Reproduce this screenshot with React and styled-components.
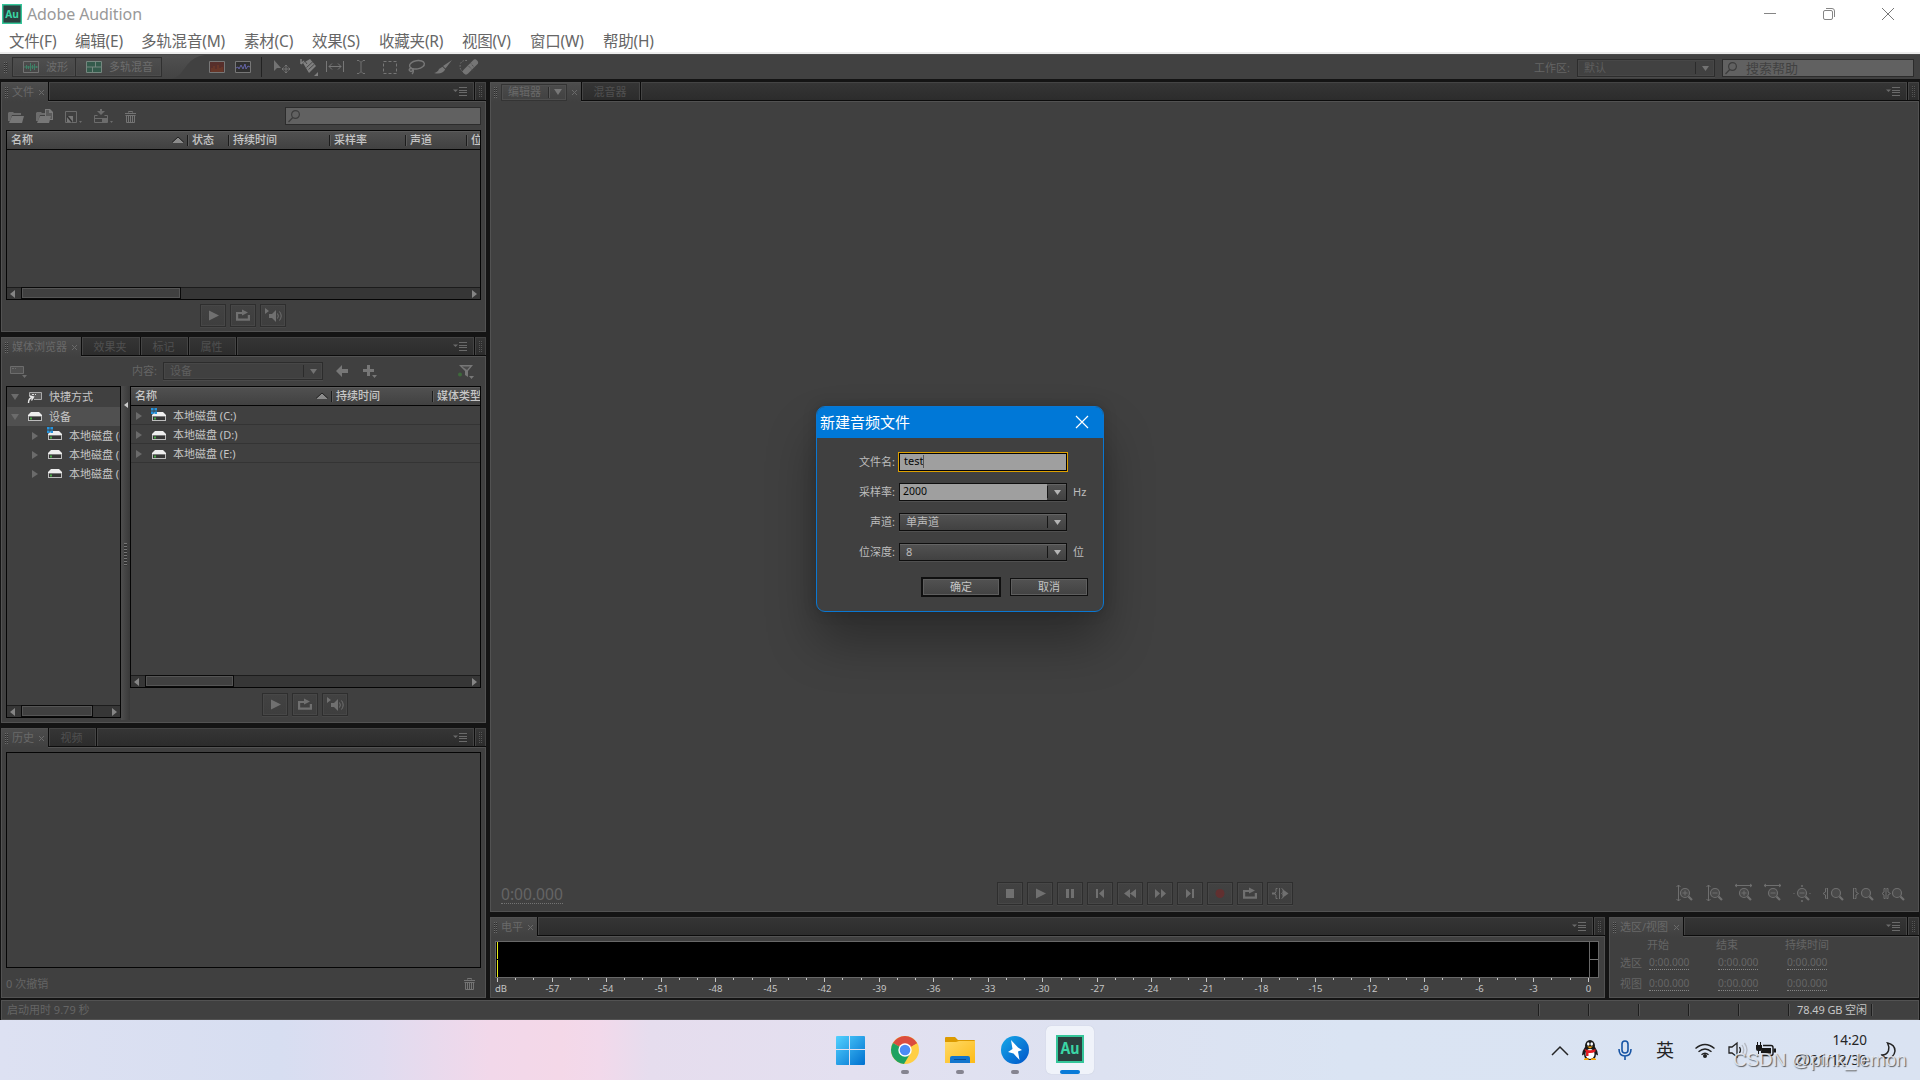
import { Fragment } from "react";
import styled, { createGlobalStyle, css } from "styled-components";

const uiFont = `"Noto Sans", "Noto Sans CJK SC", sans-serif`;

const menus = [
  { text: "文件(F)", width: 66 },
  { text: "编辑(E)", width: 66 },
  { text: "多轨混音(M)", width: 103 },
  { text: "素材(C)", width: 68 },
  { text: "效果(S)", width: 67 },
  { text: "收藏夹(R)", width: 83 },
  { text: "视图(V)", width: 68 },
  { text: "窗口(W)", width: 73 },
  { text: "帮助(H)", width: 68 },
];
const disks = ["C:", "D:", "E:"];
const transport = [
  "stop",
  "play",
  "pause",
  "first",
  "rewind",
  "forward",
  "last",
  "record",
  "loop",
  "skip",
];
const ticks = Array.from({ length: 61 }, (_, i) => i);

export default function App() {
  return (
    <>
      <GlobalStyle />
      <Screen>
        <TitleBar>
          <AuLogo size={20} />
          <span>Adobe Audition</span>
          <WindowControls />
        </TitleBar>
        <MenuBar>
          {menus.map(el => (
            <MenuItem key={el.text} $w={el.width}>
              {el.text}
            </MenuItem>
          ))}
        </MenuBar>
        <MainToolbar />
        <Workspace>
          <LeftColumn>
            <FilesPanel />
            <MediaPanel />
            <HistoryPanel />
          </LeftColumn>
          <RightColumn>
            <EditorPanel />
            <BottomRow>
              <LevelsPanel />
              <SelectionPanel />
            </BottomRow>
          </RightColumn>
        </Workspace>
        <StatusBar>
          <p>启动用时 9.79 秒</p>
          <StatusCells>
            {[50, 50, 50, 50, 50].map((w, i) => (
              <StatusCell key={i} $w={w} />
            ))}
            <StatusCell $w={83}>78.49 GB 空闲</StatusCell>
            <StatusCell $w={47} />
          </StatusCells>
        </StatusBar>
        <Taskbar />
        <NewFileDialog />
        <Watermark>CSDN @pink_lemon</Watermark>
      </Screen>
    </>
  );
}

const GlobalStyle = createGlobalStyle`
  * { box-sizing: border-box; }
  body { margin: 0; overflow: hidden; background: #141414; }
  p { margin: 0; }
  svg { display: block; flex: none; overflow: visible; }
`;
const Screen = styled.div`
  position: relative;
  display: flex;
  flex-direction: column;
  width: 1920px;
  height: 1080px;
  font: 11px/14px ${uiFont};
  color: #656565;
  background: #141414;
  white-space: nowrap;
  overflow: hidden;
`;
const TitleBar = styled.header`
  display: flex;
  align-items: center;
  height: 28px;
  padding-left: 2px;
  background: #fff;
  color: #999;
  font-size: 16px;
  letter-spacing: -0.1px;
  span {
    flex: 1;
    margin-left: 5px;
  }
`;
const MenuBar = styled.nav`
  display: flex;
  height: 26px;
  padding-left: 9px;
  border-bottom: 2px solid #ececec;
  background: #fff;
  color: #666;
`;
const MenuItem = styled.span`
  width: ${({ $w }) => $w}px;
  font-size: 15.5px;
  line-height: 26px;
  letter-spacing: -0.2px;
`;
// Header Fin

const Workspace = styled.main`
  display: flex;
  gap: 4px;
  height: 919px;
  margin: 3px 1px 0;
`;
const LeftColumn = styled.div`
  display: grid;
  grid-template-rows: 250px 386px 270px;
  row-gap: 5px;
  width: 485px;
  height: 916px;
`;
const RightColumn = styled.div`
  display: grid;
  grid-template-rows: 830px 81px;
  row-gap: 5px;
  width: 1429px;
  height: 916px;
`;
const BottomRow = styled.div`
  display: grid;
  grid-template-columns: 1115px 310px;
  column-gap: 4px;
`;
// Workspace Fin

const PanelBox = styled.section`
  display: flex;
  flex-direction: column;
  min-width: 0;
  min-height: 0;
`;
const TabRow = styled.div`
  display: flex;
  height: 19px;
  background: #0c0c0c;
`;
const stripFill = css`
  height: 18px;
  border: 1px solid #444;
  border-bottom: 0;
  background: linear-gradient(#353535, #2c2c2c);
`;
const ActiveTab = styled.div`
  position: relative;
  display: flex;
  align-items: center;
  width: ${({ $w }) => $w}px;
  height: 20px;
  padding: 0 4px 1px 3px;
  border: 1px solid #525252;
  border-width: 1px 0 0 1px;
  background: linear-gradient(#4c4c4c, #404040);
  color: #696969;
  span {
    margin-left: 3px;
  }
  > svg {
    margin-left: auto;
  }
`;
const Tab = styled.div`
  ${stripFill}
  width: ${({ $w }) => $w}px;
  margin-left: 1px;
  padding-right: 2px;
  color: #505050;
  line-height: 18px;
  text-align: center;
`;
const Strip = styled.div`
  ${stripFill}
  flex: 1;
  display: flex;
  justify-content: flex-end;
  margin-left: 1px;
  padding: 4px 6px 0 0;
`;
const StripEnd = styled.div`
  ${stripFill}
  display: flex;
  width: 11px;
  margin-left: 1px;
  padding: 3px 0 0 3px;
`;
const Grip = styled.i`
  flex: none;
  width: 4px;
  height: 11px;
  background: repeating-linear-gradient(
      to right,
      transparent 0 1px,
      ${({ $dark }) => ($dark ? "#303030" : "#444")} 1px 2px
    ),
    repeating-linear-gradient(
      ${({ $dark }) => ($dark ? "#555" : "#6c6c6c")} 0 1px,
      #2c2c2c 1px 2px
    );
`;
const PanelBody = styled.div`
  flex: 1;
  display: flex;
  flex-direction: column;
  min-height: 0;
  border: 1px solid #525252;
  background: #404040;
`;

function Panel({ tab, tabWidth, tabs = [], tabContent, children }) {
  return (
    <PanelBox>
      <TabRow>
        <ActiveTab $w={tabWidth}>
          <Grip />
          {tabContent || <span>{tab}</span>}
          <CloseMark />
        </ActiveTab>
        {tabs.map(el => (
          <Tab key={el.text} $w={el.width}>
            {el.text}
          </Tab>
        ))}
        <Strip>
          <svg width="14" height="9" stroke="#6a6a6a" fill="#6a6a6a">
            <path d="M0 2.5h5L2.5 5Z" stroke="none" />
            <path d="M6 .5h8M6 3.5h8M6 5.5h8M6 8.5h8" strokeWidth="1" />
          </svg>
        </Strip>
        <StripEnd>
          <Grip $dark />
        </StripEnd>
      </TabRow>
      <PanelBody>{children}</PanelBody>
    </PanelBox>
  );
}
// Panel Fin

const ListBox = styled.div`
  display: flex;
  flex-direction: column;
  width: ${({ $w }) => ($w ? `${$w}px` : "auto")};
  height: ${({ $h }) => $h}px;
  border: 1px solid #050505;
  background: #404040;
  color: #c6c6c6;
  overflow: hidden;
`;
const ListHead = styled.div`
  display: flex;
  flex: none;
  height: 19px;
  border-top: 1px solid #5c5c5c;
  border-bottom: 1px solid #050505;
  background: linear-gradient(#505050, #414141);
`;
const HeadCell = styled.div`
  display: flex;
  flex: none;
  align-items: center;
  justify-content: space-between;
  width: ${({ $w }) => $w}px;
  padding: 0 3px 1px 4px;
  font-weight: 500;
  & + & {
    background: linear-gradient(#1c1c1c, #1c1c1c) 0 3px / 1px 11px no-repeat,
      linear-gradient(#5b5b5b, #5b5b5b) 1px 3px / 1px 11px no-repeat;
    padding-left: 5px;
  }
`;
const ScrollTrack = styled.div`
  display: flex;
  align-items: stretch;
  height: 12px;
  margin-top: auto;
  border-top: 1px solid #1c1c1c;
  background: #363636;
  svg {
    margin: 2px 3px 0;
  }
  svg:last-child {
    margin-left: auto;
    margin-right: 3px;
  }
`;
const Thumb = styled.div`
  width: ${({ $w }) => $w}px;
  margin: -1px 0 0 3px;
  border: 1px solid #0a0a0a;
  background: #404040;
  box-shadow: inset 0 0 0 1px #555;
`;

function ScrollBar({ thumb }) {
  return (
    <ScrollTrack>
      <svg width="5" height="8" fill="#858585">
        <path d="M5 0v8L0 4Z" />
      </svg>
      <Thumb $w={thumb} />
      <svg width="5" height="8" fill="#858585">
        <path d="M0 0v8l5-4Z" />
      </svg>
    </ScrollTrack>
  );
}

const SortMark = () => (
  <svg width="12" height="6">
    <path d="M0 6 6 0l6 6Z" fill="#8b8b8b" />
    <path d="M0 5.5 6 0l6 5.5" fill="none" stroke="#222" />
  </svg>
);
const CloseMark = () => (
  <svg width="5" height="5" stroke="#6a6a6a">
    <path d="m0 0 5 5M5 0 0 5" />
  </svg>
);
// List Fin

const ButtonRow = styled.div`
  display: flex;
  gap: 4px;
  margin: ${({ $m }) => $m};
`;
const SquareButton = styled.button`
  display: grid;
  place-items: center;
  width: 26px;
  height: 23px;
  padding: 0;
  border: 1px solid #2e2e2e;
  background: linear-gradient(#424242, #3e3e3e);
  box-shadow: inset 0 0 0 1px #474747, 0 1px 0 #474747;
`;
const playGlyphs = {
  stop: <path d="M4 3h8v9H4Z" />,
  play: <path d="M4 2.5 14 7.5 4 12.5Z" />,
  pause: <path d="M4 3h3v9H4Zm5 0h3v9H9Z" />,
  first: <path d="M4 3h2v9H4Zm8 0v9L7 7.5Z" />,
  rewind: <path d="M8 3v9L2 7.5Zm6 0v9L8 7.5Z" />,
  forward: <path d="M3 3v9l5-4.5Zm6 0v9l5-4.5Z" />,
  last: <path d="M4 3v9l5-4.5ZM10 3h2v9h-2Z" />,
  record: <circle cx="8" cy="7.5" r="4.5" fill="#613030" />,
  loop: (
    <path d="M1 4h6V1.5L13 4.5 7 7.5V6H3.2v4.5h9.6V7H15v5.7H1Z" />
  ),
  skip: (
    <>
      <path d="M0 6.5h3v2H0ZM7 2h1v11H7ZM11 3.5l5.500 4-5.500 4Z" />
      <path
        d="M5.500 2.500H4v3l-1 2 1 2v3h1.500M9.500 2.500q1.500 0 1.500 2v2l-1.500 1 1.500 1v2q0 2-1.500 2"
        fill="none"
        stroke="#707070"
      />
    </>
  ),
  speaker: (
    <>
      <path d="M0 0v6l4-3ZM4 6h3l4-4v12l-4-4H4Z" />
      <path
        d="M12.5 5.5q1.7 2.5 0 5M14.5 3.5q3.4 4.5 0 9"
        fill="none"
        stroke="#707070"
      />
    </>
  ),
};

function PlayButton({ name }) {
  return (
    <SquareButton>
      <svg width="16" height="15" fill="#707070">
        {playGlyphs[name]}
      </svg>
    </SquareButton>
  );
}
// Buttons Fin

const ToolbarBox = styled.div`
  display: flex;
  align-items: center;
  height: 25px;
  background: #414141;
  border-top: 1px solid #4a4a4a;
`;
const ModeGroup = styled.div`
  display: flex;
  align-items: center;
  width: 208px;
  height: 24px;
  padding-left: 4px;
  background: linear-gradient(#505050, #434343);
  clip-path: path("M0 0H205Q194 1 187 10L181 18Q177 23 170 24H0Z");
`;
const ModeButton = styled.div`
  display: flex;
  align-items: center;
  gap: 7px;
  width: ${({ $w }) => $w}px;
  height: 20px;
  padding-left: 10px;
  margin-left: ${({ $first }) => ($first ? 4 : -1)}px;
  border: 1px solid #303030;
  box-shadow: inset 0 0 0 1px #4c4c4c;
  color: #6d6d6d;
`;
const ToolIcons = styled.div`
  display: flex;
  align-items: center;
  height: 20px;
  margin-left: 10px;
  padding-left: 7px;
  border-left: 1px solid #222;
`;
const ToolSlot = styled.span`
  display: grid;
  place-items: center;
  width: ${({ $w }) => $w}px;
`;
const Swatch = styled.svg`
  margin-left: ${({ $gap }) => $gap}px;
`;
const Select = styled.div`
  display: flex;
  align-items: center;
  width: ${({ $w }) => $w}px;
  height: 18px;
  padding: 0 5px 0 6px;
  border: 1px solid #2c2c2c;
  box-shadow: inset 0 0 0 1px #474747, 0 1px 0 #4a4a4a;
  color: #5e5e5e;
  ${({ $bright }) =>
    $bright &&
    css`
      border-color: #0e0e0e;
      background: linear-gradient(#525252, #414141);
      color: #bdbdbd;
      box-shadow: inset 0 1px 0 #646464, 0 1px 0 #505050;
    `}
  span {
    flex: 1;
  }
`;
const SelectArrow = styled.i`
  width: 14px;
  height: 12px;
  border-left: 1px solid ${({ $bright }) => ($bright ? "#161616" : "#2b2b2b")};
  color: ${({ $bright }) => ($bright ? "#b5b5b5" : "#737373")};
  svg {
    margin: 4px 0 0 6px;
  }
`;
const SearchBox = styled.div`
  display: flex;
  align-items: center;
  gap: 9px;
  width: ${({ $w }) => $w}px;
  height: 18px;
  margin-left: auto;
  padding-left: 2px;
  border: 1px solid #2c2c2c;
  background: #616161;
  color: #414141;
  font-size: 13px;
  line-height: 14px;
  span {
    padding-bottom: 1px;
  }
`;

function Arrow({ bright }) {
  return (
    <SelectArrow $bright={bright}>
      <svg width="7" height="5" fill="currentColor">
        <path d="M0 0h7L3.5 5Z" />
      </svg>
    </SelectArrow>
  );
}
const SearchGlyph = () => (
  <svg width="12" height="13" fill="none" stroke="#3c3c3c" strokeWidth="1.2">
    <circle cx="7.5" cy="4.5" r="3.9" />
    <path d="M4.8 7.5.5 12" />
  </svg>
);

function MainToolbar() {
  return (
    <ToolbarBox>
      <ModeGroup>
        <Grip />
        <ModeButton $w={64} $first>
          <svg width="16" height="12" stroke="#737373" fill="none">
            <path d="M.5.5h15v11H.5Z" />
            <path
              d="M1 6h14M3.5 4v4M5.5 5v3M7.5 2v8M9.5 4v4M11.5 3v6M13.5 5v2"
              stroke="#3f8067"
            />
          </svg>
          波形
        </ModeButton>
        <ModeButton $w={87}>
          <svg width="16" height="12" stroke="#75877f" fill="#345b4c">
            <path d="M.5.5h15v11H.5ZM.5 6h15M9.5.5V6M6.5 6v5.5" />
          </svg>
          多轨混音
        </ModeButton>
      </ModeGroup>
      <Swatch width="16" height="12" $gap={1}>
        <path d="M.5.5h15v11H.5Z" fill="#572f2b" stroke="#777" />
        <path
          d="M3 11V7M5 11V5M7 11V8M9 11V4M11 11V7M13 11V6"
          stroke="#783f27"
        />
      </Swatch>
      <Swatch width="16" height="12" $gap={10} fill="none">
        <path d="M.5.5h15v11H.5Z" fill="#303030" stroke="#777" />
        <path d="m1 7 2-1 1 2 2-4 2 4 2-5 1 5 2-3 2 1" stroke="#6464a7" />
      </Swatch>
      <ToolIcons>
        <ToolSlot $w={26}>
          <svg width="18" height="14" fill="#737373">
            <path d="M1 0v11l3-3h4Z" />
            <path
              d="M13 5v8M9 9h8M11.5 6.5 13 5l1.5 1.5M11.5 11.5 13 13l1.5-1.5M10.5 7.5 9 9l1.5 1.5M15.5 7.5 17 9l-1.5 1.5"
              fill="none"
              stroke="#737373"
            />
          </svg>
        </ToolSlot>
        <ToolSlot $w={28}>
          <svg width="18" height="18" fill="#808080">
            <path d="M1 1v5M1 6l3-3" stroke="#808080" strokeWidth="1.5" />
            <path d="m3 5 7-4 6 7-7 7Z" />
            <path
              d="m4 2 3 4M6.500 9.500l6.500-6M8.500 11.500l6-5.500"
              stroke="#4a4a4a"
              fill="none"
            />
            <path d="M18 14v4h-4Z" />
          </svg>
        </ToolSlot>
        <ToolSlot $w={24}>
          <svg width="18" height="12" fill="none" stroke="#777">
            <path d="M.5 0v11M17.5 0v11M3 5.5h12M6 2.5l-3 3 3 3M12 2.5l3 3-3 3" />
          </svg>
        </ToolSlot>
        <ToolSlot $w={28}>
          <svg width="8" height="14" fill="none" stroke="#737373">
            <path d="M0 .5h2L4 2.5 6 .5h2M4 2.5v9M0 13.5h2l2-2 2 2h2" />
          </svg>
        </ToolSlot>
        <ToolSlot $w={30}>
          <svg width="14" height="13" fill="none" stroke="#777">
            <path d="M.5.5h13v12H.5Z" strokeDasharray="3 2" />
          </svg>
        </ToolSlot>
        <ToolSlot $w={22}>
          <svg
            width="17"
            height="14"
            fill="none"
            stroke="#777"
            strokeWidth="1.4"
          >
            <ellipse
              cx="9"
              cy="4.8"
              rx="7.5"
              ry="4.1"
              transform="rotate(-10 9 5)"
            />
            <path d="M3 8q-3 1.5-1 3t3-2q-2-1-3 0M5 9q1 3-1 5" />
          </svg>
        </ToolSlot>
        <ToolSlot $w={32}>
          <svg width="18" height="14" fill="#777">
            <path d="M18 0 9 6l2.5 2.5ZM8.5 6.8l2.7 2.6Q8 15 0 13q4-1 5-4Z" />
          </svg>
        </ToolSlot>
        <ToolSlot $w={20}>
          <svg width="20" height="16">
            <path
              d="M8 1.5Q2 1 1.2 6T4.5 13"
              fill="none"
              stroke="#777"
              strokeDasharray="1.5 1.5"
            />
            <path
              d="m7 12.5 9-9"
              stroke="#757575"
              strokeWidth="6"
              strokeLinecap="round"
            />
            <path
              d="m9.5 7 5 5M12 4.5l4 5"
              stroke="#4a4a4a"
              strokeDasharray="1 1"
            />
          </svg>
        </ToolSlot>
      </ToolIcons>
      <WorkspacePick>
        工作区:
        <Select $w={138}>
          <span>默认</span>
          <Arrow />
        </Select>
        <SearchBox $w={192}>
          <SearchGlyph />
          <span>搜索帮助</span>
        </SearchBox>
      </WorkspacePick>
    </ToolbarBox>
  );
}
const WorkspacePick = styled.div`
  display: flex;
  align-items: center;
  gap: 7px;
  margin: 2px 6px 0 auto;
`;
// MainToolbar Fin

const FilesTools = styled.div`
  display: flex;
  align-items: center;
  height: 28px;
  padding: 0 4px 0 6px;
`;
const FileIcons = styled.div`
  display: flex;
  align-items: flex-end;
  gap: 12px;
`;
const Inset = styled.div`
  padding: ${({ $top }) => $top || 0}px 4px 0;
`;

const TrashIcon = () => (
  <svg width="11" height="12" fill="none" stroke="#747474">
    <path d="M3.5 1.5v-1h4v1M0 2.5h11M1.5 4.5v7h8v-7M.5 4.5h10M3.5 5v6M5.5 5v6M7.5 5v6" />
  </svg>
);

function FilesPanel() {
  return (
    <Panel tab="文件" tabWidth={47}>
      <FilesTools>
        <FileIcons>
          <svg width="16" height="11" fill="#6c6c6c">
            <path d="M0 9V1l1-1h4l1 1h7v2H4L2 9Z" />
            <path d="m1 11 3-7h12l-2 7Z" fill="#777" />
          </svg>
          <svg width="17" height="14" fill="#6c6c6c">
            <path d="M0 12V4l1-1h4l1 1h7v2H4l-2 6Z" />
            <path d="M9 0h5l3 3v8H9Z" fill="#7a7a7a" />
            <path d="M10 1h3v3h3v6h-6Z" fill="#5a5a5a" />
            <path d="m1 14 3-7h11l-2 7Z" fill="#777" />
          </svg>
          <svg width="17" height="12" fill="#6c6c6c">
            <path d="M.5.5h11v11H.5Z" fill="none" stroke="#6c6c6c" />
            <path d="M2 5h6v6H2Z" fill="#777" />
            <path d="m2 5 5 6" stroke="#333" strokeWidth="1.5" />
            <path d="M14 10h3l-1.5 2Z" />
          </svg>
          <svg width="19" height="14" fill="#6c6c6c">
            <path d="M6 0h2v2h3L7 6 3 2h3Z" />
            <path
              d="M.5 6.5h3M10.5 6.5h3v7H.5v-7M.5 9.5h13M8.5 9.5v4"
              fill="none"
              stroke="#6c6c6c"
            />
            <path d="M9 10h4v3H9ZM16 12h3l-1.5 2Z" />
          </svg>
          <TrashIcon />
        </FileIcons>
        <SearchBox $w={196}>
          <SearchGlyph />
        </SearchBox>
      </FilesTools>
      <Inset>
        <ListBox $h={170}>
          <ListHead>
            <HeadCell $w={180}>
              名称 <SortMark />
            </HeadCell>
            <HeadCell $w={41}>状态</HeadCell>
            <HeadCell $w={101}>持续时间</HeadCell>
            <HeadCell $w={76}>采样率</HeadCell>
            <HeadCell $w={61}>声道</HeadCell>
            <HeadCell $w={40}>位</HeadCell>
          </ListHead>
          <ScrollBar thumb={160} />
        </ListBox>
      </Inset>
      <ButtonRow $m="4px 0 0 198px">
        <PlayButton name="play" />
        <PlayButton name="loop" />
        <PlayButton name="speaker" />
      </ButtonRow>
    </Panel>
  );
}
// FilesPanel Fin

const MediaTools = styled.div`
  display: flex;
  align-items: center;
  height: 29px;
  padding: 0 11px 1px 8px;
  > label {
    width: 31px;
    margin-left: 105px;
  }
  > svg:nth-of-type(2) {
    margin-left: 13px;
  }
  > svg:nth-of-type(3) {
    margin-left: 15px;
  }
  > svg:last-child {
    margin-left: auto;
  }
`;
const MediaBody = styled.div`
  display: flex;
  padding-left: 4px;
`;
const TreeRow = styled.div`
  display: flex;
  align-items: center;
  flex: none;
  height: ${({ $h }) => $h || 19}px;
  padding-left: ${({ $deep }) => ($deep ? 24 : 4)}px;
  background: ${({ $active }) => ($active ? "#505050" : "none")};
  span {
    margin-left: 7px;
  }
`;
const DiskRow = styled(TreeRow)`
  padding: 2px 0 0 4px;
  border-bottom: 1px solid #343434;
`;
const Splitter = styled.div`
  width: 9px;
  height: 334px;
  padding: 16px 0 0 3px;
  background: linear-gradient(to right, #4e4e4e, #393939);
  i {
    display: block;
    width: 3px;
    height: 23px;
    margin: 135px 0 0 0;
    background: repeating-linear-gradient(#777 0 1px, #333 1px 3px);
  }
`;

const Twisty = ({ open }) => (
  <svg width="8" height="8" fill="#6b6b6b">
    <path d={open ? "M0 1h8L4 7Z" : "M1 0v8l6-4Z"} />
  </svg>
);
const DriveIcon = ({ system, left = 9 }) => (
  <IconSvg width="14" height="9" $left={left}>
    <path d="M3 0h8l3 3v1H0V3Z" fill="#eee" />
    <path d="M0 4h14v5H0Z" fill="#bcbcbc" />
    <path d="M1 4.500h12V8H1Z" fill="#363636" />
    <path d="M2 5.5h2v2H2Z" fill="#48a746" />
    {system && (
      <path
        d="M-1-4h2.6v2.6H-1ZM2.4-4H5v2.6H2.4ZM-1-.6h2.6V2H-1ZM2.4-.6H5V2H2.4Z"
        fill="#2494df"
      />
    )}
  </IconSvg>
);
const IconSvg = styled.svg`
  margin-left: ${({ $left }) => $left}px;
`;

function MediaPanel() {
  return (
    <Panel
      tab="媒体浏览器"
      tabWidth={80}
      tabs={[
        { text: "效果夹", width: 58 },
        { text: "标记", width: 47 },
        { text: "属性", width: 47 },
      ]}
    >
      <MediaTools>
        <svg width="17" height="13" fill="#6c6c6c">
          <path d="M.5 1.5h13v7H.5Z" fill="#505050" stroke="#6c6c6c" />
          <path d="M2 3h2v1H2ZM5 3h1v1H5ZM12 10h5l-2.5 3Z" />
        </svg>
        <label>内容:</label>
        <Select $w={160}>
          <span>设备</span>
          <Arrow />
        </Select>
        <svg width="12" height="12" fill="#777">
          <path d="M6 0v4h6v4H6v4L0 6Z" />
        </svg>
        <svg width="15" height="14" fill="#777">
          <path d="M4 1h3v4h4v3H7v4H4V8H0V5h4ZM9 11h5l-2.5 3Z" />
        </svg>
        <svg width="16" height="13" fill="#777">
          <path d="M1 0h14l-5 6v6L7 10V6Z" />
          <path d="M4 1.5h8L9 5Z" fill="#4a4a4a" />
          <circle cx="2" cy="9.5" r="2" fill="#3d6a3b" />
          <path d="M11 11h5l-2.5 3Z" />
        </svg>
      </MediaTools>
      <MediaBody>
        <ListBox $w={115} $h={332}>
          <TreeRow $h={20}>
            <Twisty open />
            <IconSvg width="14" height="11" fill="none" $left={9}>
              <path d="M1.500 4V.5h12v7H6" fill="#5c5c5c" stroke="#aaa" />
              <path d="M4 2.500h2M7 2.500h1" stroke="#ddd" />
              <path
                d="M.5 11q0-5 4-5.500M1.500 4l4 1-2 3.500"
                stroke="#e8e8e8"
                strokeWidth="1.400"
              />
            </IconSvg>
            <span>快捷方式</span>
          </TreeRow>
          <TreeRow $active>
            <Twisty open />
            <DriveIcon />
            <span>设备</span>
          </TreeRow>
          {disks.map((el, i) => (
            <TreeRow key={el} $deep>
              <Twisty />
              <DriveIcon system={i === 0} />
              <span>本地磁盘 ({el})</span>
            </TreeRow>
          ))}
          <ScrollBar thumb={72} />
        </ListBox>
        <Splitter>
          <svg width="4" height="6" fill="#ccc">
            <path d="M4 0v6L0 3Z" />
          </svg>
          <i />
        </Splitter>
        <div>
          <ListBox $w={351} $h={302}>
            <ListHead>
              <HeadCell $w={200}>
                名称 <SortMark />
              </HeadCell>
              <HeadCell $w={101}>持续时间</HeadCell>
              <HeadCell $w={80}>媒体类型</HeadCell>
            </ListHead>
            {disks.map((el, i) => (
              <DiskRow key={el}>
                <Twisty />
                <DriveIcon system={i === 0} />
                <span>本地磁盘 ({el})</span>
              </DiskRow>
            ))}
            <ScrollBar thumb={89} />
          </ListBox>
          <ButtonRow $m="5px 0 0 132px">
            <PlayButton name="play" />
            <PlayButton name="loop" />
            <PlayButton name="speaker" />
          </ButtonRow>
        </div>
      </MediaBody>
    </Panel>
  );
}
// MediaPanel Fin

const HistoryFoot = styled.footer`
  display: flex;
  align-items: center;
  justify-content: space-between;
  height: 31px;
  padding: 2px 10px 0 4px;
`;

function HistoryPanel() {
  return (
    <Panel tab="历史" tabWidth={47} tabs={[{ text: "视频", width: 47 }]}>
      <Inset $top={4}>
        <ListBox $h={216} />
      </Inset>
      <HistoryFoot>
        0 次撤销
        <TrashIcon />
      </HistoryFoot>
    </Panel>
  );
}
// HistoryPanel Fin

const EditorPick = styled.div`
  display: flex;
  align-items: center;
  width: 66px;
  height: 17px;
  margin-left: 3px;
  padding-left: 6px;
  border: 1px solid #343434;
  box-shadow: inset 0 0 0 1px #4f4f4f;
  svg {
    margin-left: 4px;
  }
`;
const PickBar = styled.i`
  width: 2px;
  height: 11px;
  margin-left: 7px;
  background: linear-gradient(to right, #2c2c2c 50%, #5a5a5a 50%);
`;
const EditorFoot = styled.footer`
  display: grid;
  grid-template-columns: 506px 1fr 242px;
  align-items: center;
  height: 36px;
  margin-top: auto;
`;
const BigTime = styled.span`
  justify-self: start;
  margin: 3px 0 0 10px;
  border-bottom: 1px dotted #737373;
  font-size: 15.6px;
  line-height: 17px;
`;
const ZoomIcons = styled.div`
  display: flex;
  gap: 9.6px;
  padding-top: 1px;
`;
const zoomExtras = [
  { w: 20, d: "M2.500-1v16M.5 1l2-2 2 2M.5 13l2 2 2-2", sign: "+" },
  { w: 20, d: "M2.500-1v16M.5 1l2-2 2 2M.5 13l2 2 2-2", sign: "-" },
  { w: 19, d: "M0-.5h17M2-2 0-.5 2 1M15-2l2 1.500L15 1", sign: "+" },
  { w: 20, d: "M0-.5h17M2-2 0-.5 2 1M15-2l2 1.500L15 1", sign: "-" },
  { w: 20, d: "M9-1v2M8 0h2M9 14v2M8 15h2M1 7v1M17 7v1", sign: "-" },
  { w: 20, d: "M3.500 2.500h-1v3.500L0 7.500 2.500 9v3.500h1M4.500 2v11", sign: "" },
  { w: 20, d: "M.5 2v11M1.500 2.500h1.500v3.500L5.500 7.500 3 9v3.500H1.500", sign: "" },
  {
    w: 22,
    d: "M3 2.500H2v3.500L0 7.500 2 9v3.500h1M4 2v11M5 2.500h1v3.500L8.500 7.500 6 9v3.500H5",
    sign: "",
  },
];

function ZoomIcon({ w, d, sign }) {
  const cx = sign ? 9 : w - 7;
  return (
    <svg width={w} height="16" fill="none" stroke="#6f6f6f">
      <path d={d} />
      <circle cx={cx} cy="7" r="4.500" fill="#4a4a4a" strokeWidth="1.200" />
      <path d={`M${cx + 3.5} 10.500l3.500 3.500`} strokeWidth="2.200" />
      {sign && <path d={`M${cx - 2.5} 7h5`} />}
      {sign === "+" && <path d={`M${cx} 4.500v5`} />}
    </svg>
  );
}

function EditorPanel() {
  return (
    <Panel
      tabWidth={91}
      tabs={[{ text: "混音器", width: 58 }]}
      tabContent={
        <EditorPick>
          编辑器
          <PickBar />
          <svg width="8" height="6" fill="#777">
            <path d="M0 0h8L4 6Z" />
          </svg>
        </EditorPick>
      }
    >
      <EditorFoot>
        <BigTime>0:00.000</BigTime>
        <ButtonRow $m="1px 0 0 0">
          {transport.map(el => (
            <PlayButton key={el} name={el} />
          ))}
        </ButtonRow>
        <ZoomIcons>
          {zoomExtras.map((el, i) => (
            <ZoomIcon key={i} {...el} />
          ))}
        </ZoomIcons>
      </EditorFoot>
    </Panel>
  );
}
// EditorPanel Fin

const Meter = styled.div`
  display: flex;
  width: 1104px;
  height: 37px;
  margin: 4px 0 0 4px;
  border: 1px solid #686868;
  background: #000;
`;
const PeakLine = styled.div`
  width: 1px;
  height: 35px;
  margin-left: 1px;
  background: linear-gradient(#e8ee18 17px, #000 17px 18px, #e8ee18 18px);
`;
const ClipLights = styled.div`
  width: 9px;
  margin-left: auto;
  border-left: 1px solid #686868;
  background: linear-gradient(#000 17px, #777 17px 18px, #000 18px);
`;
const Scale = styled.svg`
  margin-left: 4px;
  font-size: 9.5px;
  fill: #c6c6c6;
`;

function LevelsPanel() {
  return (
    <Panel tab="电平" tabWidth={47}>
      <Meter>
        <PeakLine />
        <ClipLights />
      </Meter>
      <Scale width="1104" height="18">
        {ticks.map(i => {
          const x = Math.round(2 + i * 18.18);
          const major = i % 3 === 0;
          return (
            <Fragment key={i}>
              <rect x={x} y="0" width="1" height={major ? 4 : 2} />
              {major && (
                <text
                  x={i === 0 ? 0 : x + 0.5}
                  y="14"
                  textAnchor={i === 0 ? "start" : "middle"}
                >
                  {i === 0 ? "dB" : i - 60}
                </text>
              )}
            </Fragment>
          );
        })}
      </Scale>
    </Panel>
  );
}
// LevelsPanel Fin

const RangeGrid = styled.div`
  display: grid;
  grid-template-columns: 27px 69px 69px auto;
  grid-template-rows: 16px 20px 21px;
  align-items: center;
  padding-left: 10px;
`;
const TimeValue = styled.span`
  justify-self: start;
  margin-left: 2px;
  border-bottom: 1px dotted #858585;
  font-size: 10.2px;
  line-height: 13px;
`;

function SelectionPanel() {
  return (
    <Panel tab="选区/视图" tabWidth={74}>
      <RangeGrid>
        <span />
        <span>开始</span>
        <span>结束</span>
        <span>持续时间</span>
        {["选区", "视图"].map(el => (
          <Fragment key={el}>
            <span>{el}</span>
            <TimeValue>0:00.000</TimeValue>
            <TimeValue>0:00.000</TimeValue>
            <TimeValue>0:00.000</TimeValue>
          </Fragment>
        ))}
      </RangeGrid>
    </Panel>
  );
}
// SelectionPanel Fin

const StatusBar = styled.footer`
  display: flex;
  align-items: center;
  justify-content: space-between;
  height: 20px;
  margin: -1px 1px 0;
  padding-left: 5px;
  border: 1px solid #525252;
  background: #404040;
`;
const StatusCells = styled.div`
  display: flex;
`;
const StatusCell = styled.div`
  width: ${({ $w }) => $w}px;
  height: 12px;
  padding-left: 8px;
  border-left: 1px solid #1e1e1e;
  box-shadow: inset 1px 0 0 #555;
  color: #c6c6c6;
  line-height: 12px;
  letter-spacing: -0.1px;
`;
// StatusBar Fin

const TaskbarBox = styled.footer`
  display: flex;
  height: 60px;
  padding-left: 826px;
  background: linear-gradient(
    90deg,
    #dde1f2 0,
    #d7def1 280px,
    #e0dcf0 380px,
    #f2d8ea 490px,
    #f4d8e8 560px,
    #f2d9eb 600px,
    #e6ddee 650px,
    #e3e0f0 850px,
    #dde2f1 1100px,
    #dae4f3 1350px,
    #dae3f2 1920px
  );
  color: #252525;
`;
const TaskSlot = styled.div`
  display: flex;
  flex-direction: column;
  align-items: center;
  flex: none;
  width: 48px;
  height: 48px;
  margin: 6px 7px 0 0;
  padding-top: ${({ $active }) => ($active ? 8 : 9)}px;
  border-radius: 5px;
  background: ${({ $active }) => ($active ? "#f0f3fa" : "none")};
  box-shadow: ${({ $active }) => ($active ? "0 0 1px #b4bdcd" : "none")};
  svg {
    height: 30px;
  }
  &::after {
    content: "";
    width: ${({ $active }) => ($active ? 20 : 8)}px;
    height: 4px;
    margin-top: ${({ $active }) => ($active ? 6 : 5)}px;
    border-radius: 2px;
    background: ${({ $active, $idle }) =>
      $active ? "#087ad8" : $idle ? "none" : "#858490"};
  }
`;
const Tray = styled.div`
  display: flex;
  align-items: center;
  margin-left: auto;
  padding-right: 12px;
`;
const TraySlot = styled.span`
  display: grid;
  place-items: center;
  width: ${({ $w }) => $w}px;
  font-size: 18px;
  line-height: 24px;
`;
const Clock = styled.div`
  width: 86px;
  padding: 0 1px 1px 0;
  font-size: 13.5px;
  line-height: 20px;
  text-align: right;
`;

function AuLogo({ size }) {
  return (
    <svg width={size} height={size} viewBox="0 0 28 28">
      <path d="M0 0h28v28H0Z" fill="#35c69a" />
      <path d="M2 2h24v24H2Z" fill="#2c403f" />
      <text
        x="14"
        y="19"
        textAnchor="middle"
        fill="#3ad6a5"
        fontFamily="Noto Sans, sans-serif"
        fontWeight="700"
        fontSize="16"
        textLength="19"
        lengthAdjust="spacingAndGlyphs"
      >
        Au
      </text>
    </svg>
  );
}

function Taskbar() {
  return (
    <TaskbarBox>
      <TaskSlot $idle>
        <svg width="30" height="30" viewBox="0 0 30 30">
          <defs>
            <linearGradient id="win" x2="1" y2="1">
              <stop stopColor="#52d1ff" />
              <stop offset="1" stopColor="#0070cf" />
            </linearGradient>
          </defs>
          <path
            d="M1 2q0-1 1-1h12v13H1ZM15 1h14q1 0 1 1v12H15ZM1 15h13v15H2q-1 0-1-1ZM15 15h15v14q0 1-1 1H15Z"
            fill="url(#win)"
          />
        </svg>
      </TaskSlot>
      <TaskSlot>
        <svg width="28" height="30" viewBox="0 -1 28 30">
          <circle cx="14" cy="14" r="14" fill="#ffcf44" />
          <path d="M14 14 1.900 7A14 14 0 0 1 26.100 7Z" fill="#db4c3e" />
          <path d="M1.900 7A14 14 0 0 0 13 28l6.500-11Z" fill="#1da261" />
          <path d="M14 7h12.100L14 14Z" fill="#db4c3e" />
          <circle cx="14" cy="14" r="6.700" fill="#fff" />
          <circle cx="14" cy="14" r="5.300" fill="#4c8bf5" />
        </svg>
      </TaskSlot>
      <TaskSlot>
        <svg width="30" height="30" viewBox="0 0 30 30">
          <defs>
            <linearGradient id="folder" x2="1" y2="1">
              <stop stopColor="#ffd965" />
              <stop offset="1" stopColor="#fdbb17" />
            </linearGradient>
          </defs>
          <path d="M0 3q0-1 1-1h9l3 3h16q1 0 1 1v6H0Z" fill="#dc9a00" />
          <path d="M0 7h11l3-1h16v22H0Z" fill="url(#folder)" />
          <path d="M5 28v-5q0-2 2-2h16q2 0 2 2v5Z" fill="#1375cd" />
          <path d="M9 24.500h12" stroke="#0a4d93" />
        </svg>
      </TaskSlot>
      <TaskSlot>
        <svg width="28" height="30" viewBox="0 -1 28 30">
          <defs>
            <linearGradient id="bird" x2="1" y2="1">
              <stop stopColor="#16a9e8" />
              <stop offset="1" stopColor="#0054c9" />
            </linearGradient>
          </defs>
          <circle cx="14" cy="14" r="14" fill="url(#bird)" />
          <path
            d="m10 4 7 7.500 4 2.500-4 1.500 1.500 8.500-6-6.500L7 16l4.500-3Z"
            fill="#fff"
          />
        </svg>
      </TaskSlot>
      <TaskSlot $active>
        <AuLogo size={28} />
      </TaskSlot>
      <Tray>
        <TraySlot $w={28}>
          <svg
            width="16"
            height="9"
            fill="none"
            stroke="#252525"
            strokeWidth="1.500"
          >
            <path d="m0 9 8-8 8 8" />
          </svg>
        </TraySlot>
        <TraySlot $w={32}>
          <svg width="16" height="20">
            <ellipse cx="8" cy="6" rx="5" ry="6" fill="#191919" />
            <path
              d="M3 7Q0 11 0 15q1 1 2-1 0 6 6 6t6-6q1 2 2 1 0-4-3-8Z"
              fill="#191919"
            />
            <ellipse cx="8" cy="14" rx="4.500" ry="5" fill="#fff" />
            <ellipse cx="6.300" cy="4" rx="1.300" ry="1.800" fill="#fff" />
            <ellipse cx="9.700" cy="4" rx="1.300" ry="1.800" fill="#fff" />
            <path
              d="M5 6.500h6L8 8.500ZM2 19q2-2 5 0l-1 1H2ZM9 19q3-2 5 0v1H9Z"
              fill="#f7a400"
            />
            <path
              d="M2.500 9q5.500 2.500 11 0v2.500q-3 2-7 1.500v3H4v-4Z"
              fill="#e11b22"
            />
          </svg>
        </TraySlot>
        <TraySlot $w={38}>
          <svg
            width="14"
            height="20"
            fill="none"
            stroke="#1855a5"
            strokeWidth="1.600"
          >
            <rect x="4" y="1" width="6" height="12" rx="3" />
            <path d="M1 9q0 7 6 7t6-7M7 16v4" />
          </svg>
        </TraySlot>
        <TraySlot $w={42}>英</TraySlot>
        <TraySlot $w={38}>
          <svg
            width="20"
            height="15"
            fill="none"
            stroke="#222"
            strokeWidth="1.400"
          >
            <path d="M.5 5.500q9.500-8 19 0M3.500 8.800q6.500-5.800 13 0M6.500 11.800q3.500-3.200 7 0" />
            <circle cx="10" cy="13" r="1.300" fill="#222" />
          </svg>
        </TraySlot>
        <TraySlot $w={26}>
          <svg
            width="19"
            height="16"
            fill="none"
            stroke="#222"
            strokeWidth="1.300"
          >
            <path d="M1 5h3l5-4v14l-5-4H1Z" />
            <path d="M11.500 5q2 3 0 6" />
            <path d="M14 3q3.500 5 0 10M16.500 1q5 7 0 14" stroke="#b5b9c2" />
          </svg>
        </TraySlot>
        <TraySlot $w={32}>
          <svg width="20" height="16" fill="#181818">
            <path d="M1 0v3H0v4q0 2 2 2v3h1V9q3 0 3-2V3H5V0H4v3H2V0Z" />
            <path
              d="M7 3.500h8q2 0 2 2v6q0 2-2 2H6"
              fill="none"
              stroke="#181818"
              strokeWidth="1.400"
            />
            <path d="M6 6h9v5.500H5V9ZM17.500 6.500H20v4h-2.500Z" />
          </svg>
        </TraySlot>
        <Clock>
          14:20
          <br />
          2021/12/30
        </Clock>
        <TraySlot $w={40}>
          <svg
            width="15"
            height="17"
            fill="none"
            stroke="#222"
            strokeWidth="1.500"
          >
            <path d="M6.500 1q7.500 1.500 7.500 8-1 7-8 7-3 0-5-3 5 0 6.500-4.500Q8.500 4.500 6.500 1Z" />
          </svg>
        </TraySlot>
      </Tray>
    </TaskbarBox>
  );
}
// Taskbar Fin

const Controls = styled.div`
  display: flex;
  align-items: center;
  gap: 47px;
  padding-right: 26px;
`;

function WindowControls() {
  return (
    <Controls>
      <svg width="12" height="12" stroke="#858585">
        <path d="M0 5.500h12" />
      </svg>
      <svg width="12" height="12" fill="none" stroke="#858585">
        <rect x=".5" y="2.500" width="9" height="9" rx="1.500" />
        <path d="M3 .5h6q2.500 0 2.500 2.500v6" />
      </svg>
      <svg width="12" height="12" stroke="#777">
        <path d="m0 0 12 12M12 0 0 12" />
      </svg>
    </Controls>
  );
}

const DialogBox = styled.div`
  position: absolute;
  left: 816px;
  top: 406px;
  width: 288px;
  height: 206px;
  border: 1px solid #0a77d2;
  border-radius: 9px;
  background: #404040;
  color: #bdbdbd;
  overflow: hidden;
  box-shadow: 0 30px 50px rgba(0, 0, 0, 0.32), 0 0 14px rgba(0, 0, 0, 0.18);
`;
const DialogTitle = styled.div`
  display: flex;
  align-items: center;
  justify-content: space-between;
  height: 31px;
  padding: 0 15px 1px 3px;
  background: #0078d7;
  color: #fff;
  font-size: 15px;
`;
const Form = styled.div`
  display: grid;
  grid-template-columns: 78px 170px auto;
  grid-template-rows: repeat(4, 30px);
  column-gap: 3px;
  align-items: center;
  padding-top: 9px;
  label {
    text-align: right;
  }
  > :nth-child(3n + 2) {
    justify-self: center;
  }
`;
const NameInput = styled.div`
  width: 170px;
  height: 20px;
  padding-left: 5px;
  border: 1px solid #dda000;
  background: #9f9f9f;
  box-shadow: inset 0 0 0 1px #050505;
  color: #080808;
  line-height: 16px;
  &::after {
    content: "";
    display: inline-block;
    height: 13px;
    border-left: 1px solid #555;
    vertical-align: -3px;
  }
`;
const RateSelect = styled(Select)`
  padding-left: 0;
  color: #080808;
  span {
    height: 16px;
    padding-left: 3px;
    background: #9f9f9f;
    line-height: 15px;
    font-size: 10.5px;
  }
`;
const Unit = styled.span`
  padding-left: 2px;
`;
const DialogButtons = styled.div`
  display: flex;
  align-items: center;
  gap: 9px;
  margin: 10px 0 0 104px;
`;
const DialogButton = styled.button`
  width: ${({ $main }) => ($main ? 80 : 78)}px;
  height: ${({ $main }) => ($main ? 20 : 18)}px;
  padding: 0;
  border: ${({ $main }) => ($main ? 2 : 1)}px solid #101010;
  background: linear-gradient(#525252, #424242);
  box-shadow: inset 0 0 0 1px #5e5e5e;
  color: #c4c4c4;
  font: 11px/14px ${uiFont};
`;

function NewFileDialog() {
  return (
    <DialogBox>
      <DialogTitle>
        新建音频文件
        <svg width="12" height="12" stroke="#fff" strokeWidth="1.200">
          <path d="m0 0 12 12M12 0 0 12" />
        </svg>
      </DialogTitle>
      <Form>
        <label>文件名:</label>
        <NameInput>test</NameInput>
        <span />
        <label>采样率:</label>
        <RateSelect $w={168} $bright>
          <span>2000</span>
          <Arrow bright />
        </RateSelect>
        <Unit>Hz</Unit>
        <label>声道:</label>
        <Select $w={168} $bright>
          <span>单声道</span>
          <Arrow bright />
        </Select>
        <span />
        <label>位深度:</label>
        <Select $w={168} $bright>
          <span>8</span>
          <Arrow bright />
        </Select>
        <Unit>位</Unit>
      </Form>
      <DialogButtons>
        <DialogButton $main>确定</DialogButton>
        <DialogButton>取消</DialogButton>
      </DialogButtons>
    </DialogBox>
  );
}
// NewFileDialog Fin

const Watermark = styled.div`
  position: absolute;
  left: 1733px;
  top: 1048px;
  color: rgba(235, 238, 245, 0.85);
  font: 18.8px/24px "Liberation Sans", sans-serif;
  text-shadow: 1px 1px 1px rgba(60, 60, 60, 0.8);
`;
